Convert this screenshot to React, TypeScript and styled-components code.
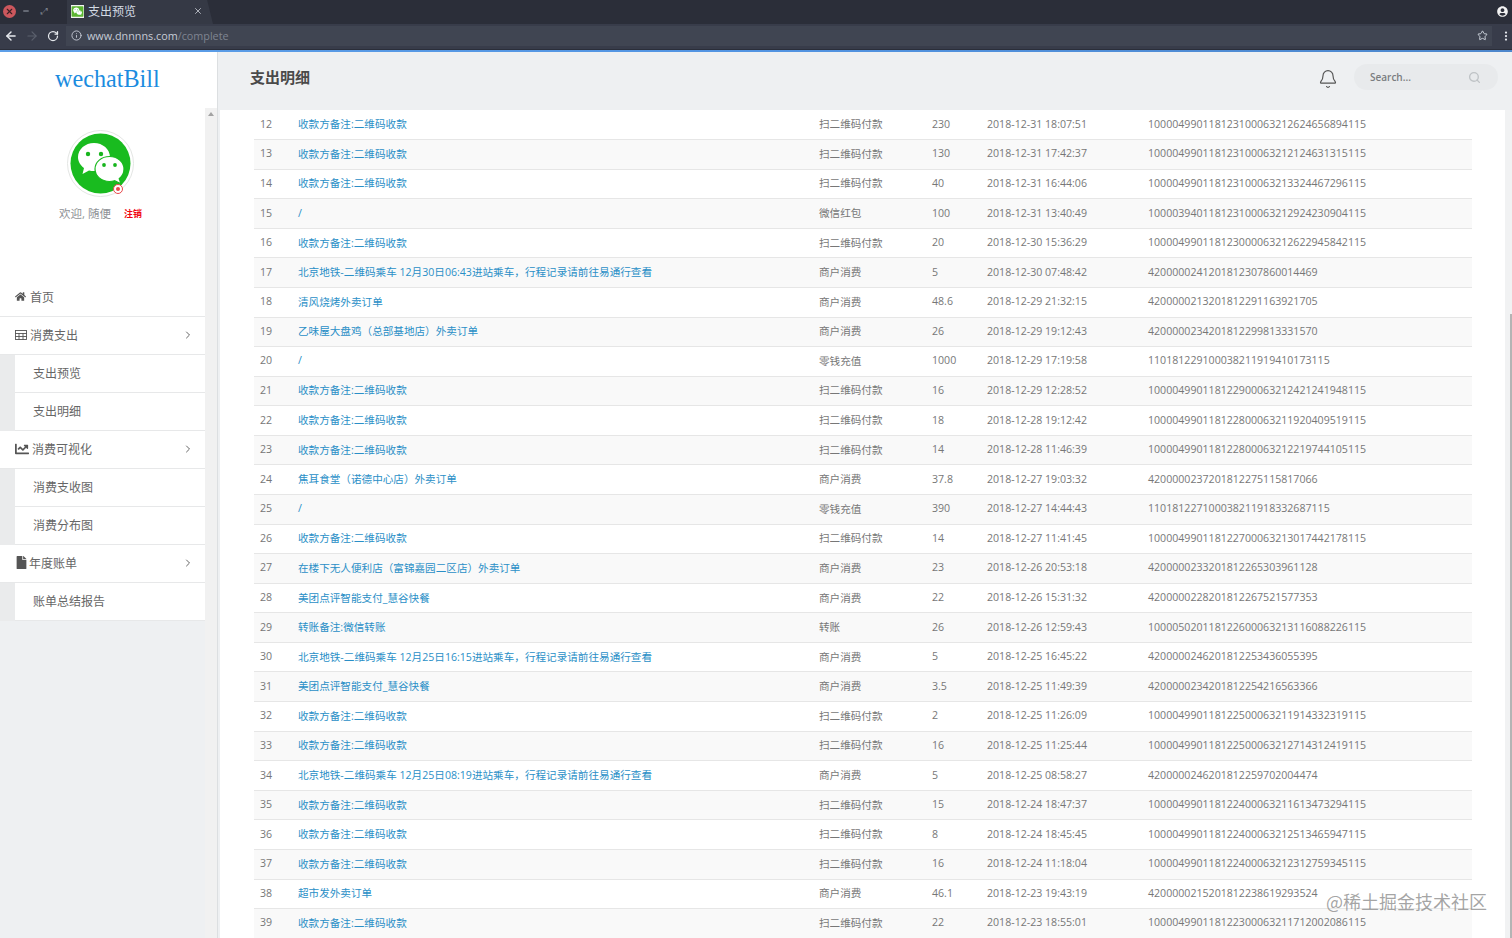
import React from "react";
import styled, { createGlobalStyle } from "styled-components";
import { ArrowLeft, ArrowRight, RotateCw, Info, Star, EllipsisVertical, Bell, Search, X, Minus, ChevronRight } from "lucide-react";
import { FaHome, FaChartLine, FaFile, FaUserCircle } from "react-icons/fa";

const Global = createGlobalStyle`
  html, body { margin: 0; padding: 0; height: 938px; overflow: hidden; background: #eef0f2; }
  * { box-sizing: border-box; }
  body { font-family: "Open Sans", "Noto Sans CJK SC", sans-serif; }
`;

const Page = styled.div`
  width: 1512px;
  height: 938px;
  display: flex;
  flex-direction: column;
  overflow: hidden;
  position: relative;
`;
const TabBar = styled.div`
  height: 24px;
  background: #2b2e39;
  display: flex;
  align-items: center;
  padding: 0 0 2px 3px;
`;
const WinClose = styled.span`
  width: 13px;
  height: 13px;
  border-radius: 50%;
  background: #cc575d;
  color: #3a2025;
  display: flex;
  align-items: center;
  justify-content: center;
`;
const WinBtn = styled.span`
  width: 19px;
  display: flex;
  justify-content: center;
  color: #9ea3af;
`;
const WinExpand = styled.span`
  width: 19px;
  display: flex;
  justify-content: center;
  color: #7d818c;
  font-size: 9px;
  line-height: 10px;
`;
const Tab = styled.div`
  margin: 2px 0 0 13px;
  width: 146px;
  height: 24px;
  background: #353945;
  display: flex;
  align-items: center;
  padding: 0 8px 2px 4px;
  color: #d3dae3;
  font-size: 12px;
  clip-path: polygon(0 0, 96% 0, 100% 100%, 0 100%);
`;
const TabIcon = styled.svg`
  width: 13px;
  height: 13px;
  margin-right: 4px;
  flex: none;
`;
const TabTitle = styled.span`
  flex: 1;
`;
const TabClose = styled.span`
  color: #c6cad2;
  display: flex;
  margin-right: 2px;
`;
const AccountIcon = styled.span`
  margin-left: auto;
  margin-right: 4px;
  color: #f2f2f2;
  display: flex;
  font-size: 11px;
`;
const ToolBar = styled.div`
  height: 26px;
  background: #383c4a;
  display: flex;
  align-items: center;
  padding-bottom: 2px;
  border-bottom: 1px solid #2b2e39;
`;
const NavBtn = styled.span<{ $dim?: boolean; $w: number }>`
  width: ${(p) => p.$w}px;
  display: flex;
  justify-content: center;
  color: ${(p) => (p.$dim ? "#5b606d" : "#e6e9ee")};
`;
const UrlBar = styled.div`
  width: 1426px;
  height: 20px;
  background: #404552;
  margin-left: 2px;
  display: flex;
  align-items: center;
  padding-left: 5px;
  font-size: 10.8px;
  color: #c7ccd6;
`;
const UrlIcon = styled.span`
  display: flex;
  color: #c7ccd6;
  margin-right: 5px;
`;
const UrlHost = styled.span``;
const UrlPath = styled.span`
  color: #7f8491;
`;
const UrlStar = styled.span`
  margin-left: auto;
  margin-right: 4px;
  display: flex;
  color: #d3dae3;
`;
const MenuDots = styled.span`
  margin-left: auto;
  width: 12px;
  display: flex;
  justify-content: center;
  color: #e6e9ee;
`;
const Blue = styled.div`
  height: 2px;
  background: linear-gradient(90deg, #5d9fe8 0, #5294e2 50%, #4d87cc 100%);
`;
const Body = styled.div`
  flex: 1;
  display: flex;
  min-height: 0;
`;
const Side = styled.aside`
  width: 218px;
  flex: none;
  display: flex;
  flex-direction: column;
  border-right: 1px solid #dcdfe1;
  background: #eef0f2;
`;
const Logo = styled.div`
  height: 56px;
  background: #fff;
  font-family: "Liberation Serif", serif;
  font-size: 24.2px;
  color: #1b8ce0;
  display: flex;
  align-items: flex-start;
  padding: 12px 0 0 55px;
  line-height: 30px;
`;
const SideRow = styled.div`
  flex: 1;
  display: flex;
  min-height: 0;
`;
const SideInner = styled.div`
  width: 205px;
  flex: none;
  display: flex;
  flex-direction: column;
`;
const Track = styled.div`
  width: 12px;
  flex: none;
  background: #f1f1f1;
  display: flex;
  justify-content: center;
  padding-top: 4px;
`;
const TrackArrow = styled.span`
  width: 0;
  height: 0;
  border-left: 3px solid transparent;
  border-right: 3px solid transparent;
  border-bottom: 4px solid #a3a3a3;
`;
const Profile = styled.div`
  height: 171px;
  background: #fff;
  display: flex;
  flex-direction: column;
  position: relative;
  padding: 22px 0 0 0;
`;
const AvatarWrap = styled.div`
  width: 67px;
  height: 67px;
  margin-left: 67px;
  position: relative;
`;
const AvatarSvg = styled.svg`
  width: 67px;
  height: 67px;
  display: block;
`;
const StatusDot = styled.span`
  position: absolute;
  left: 46px;
  top: 54px;
  width: 10px;
  height: 10px;
  border-radius: 50%;
  border: 1.5px solid #e8474a;
  background: #fff;
  display: flex;
  align-items: center;
  justify-content: center;
`;
const StatusCore = styled.span`
  width: 4px;
  height: 4px;
  border-radius: 50%;
  background: #e8474a;
`;
const Welcome = styled.div`
  margin: 9px 0 0 59px;
  display: flex;
  align-items: center;
  font-size: 11.5px;
  color: #8f9296;
  line-height: 16px;
`;
const Logout = styled.span`
  margin-left: 13px;
  font-size: 9px;
  font-weight: 700;
  color: #f0050f;
`;
const MenuItem = styled.div`
  height: 38px;
  background: #fff;
  border-bottom: 1px solid #e7e8e9;
  display: flex;
  align-items: center;
  padding: 0 11px 2px 15px;
  font-size: 12px;
  color: #666;
`;
const MenuIcon = styled.span<{ $size: number; $gap: number }>`
  display: flex;
  color: #555;
  margin-right: ${(p) => p.$gap}px;
  font-size: ${(p) => p.$size}px;
`;
const TableGlyph = styled.svg`
  width: 12px;
  height: 10px;
  display: block;
`;
const MenuChevron = styled.span`
  margin-left: auto;
  display: flex;
  color: #666;
  margin-top: 1px;
`;
const SubWrap = styled.div`
  padding-left: 15px;
  background: #eaebec;
`;
const SubItem = styled.div`
  height: 38px;
  background: #fff;
  border-bottom: 1px solid #e7e8e9;
  display: flex;
  align-items: center;
  padding: 0 0 2px 18px;
  font-size: 12px;
  color: #666;
`;
const Main = styled.main`
  flex: 1;
  min-width: 0;
  display: flex;
  flex-direction: column;
`;
const Header = styled.header`
  height: 58px;
  flex: none;
  display: flex;
  align-items: center;
  padding: 0 14px 8px 32px;
`;
const Title = styled.h1`
  margin: 0 0 2px;
  font-size: 15px;
  font-weight: 700;
  color: #4a4a4a;
  font-family: "Noto Sans CJK SC", sans-serif;
`;
const BellWrap = styled.span`
  margin-left: auto;
  margin-right: 16px;
  margin-top: 3px;
  display: flex;
  color: #555;
`;
const SearchBox = styled.div`
  width: 144px;
  height: 26px;
  border-radius: 13px;
  background: #e8eaec;
  display: flex;
  align-items: center;
  padding: 0 17px 0 16px;
  font-size: 10px;
  font-weight: 600;
  color: #7a7d80;
`;
const SearchIcon = styled.span`
  margin-left: auto;
  display: flex;
  color: #bfc3c6;
`;
const ContentRow = styled.div`
  flex: 1;
  min-height: 0;
  display: flex;
  margin-left: 2px;
`;
const Card = styled.section`
  flex: 1;
  background: #fff;
  padding: 0 33px 0 34px;
  overflow: hidden;
`;
const PageBar = styled.div`
  width: 7px;
  flex: none;
  display: flex;
  justify-content: flex-end;
  padding-top: 204px;
  background: #f1f2f3;
`;
const PageThumb = styled.span`
  width: 2px;
  background: #b4b4b4;
`;
const Table = styled.table`
  width: 1218px;
  table-layout: fixed;
  border-collapse: collapse;
  font-size: 10.6px;
  color: #777;
`;
const Row = styled.tr<{ $odd: boolean }>`
  height: 29.58px;
  background: ${(p) => (p.$odd ? "#f9f9f9" : "#fff")};
`;
const Cell = styled.td`
  padding: 0 6px 2px;
  border-bottom: 1px solid #e6e6e6;
  white-space: nowrap;
  overflow: hidden;
`;
const LinkCell = styled(Cell)`
  color: #2a8fc7;
`;
const Mark = styled.div`
  position: absolute;
  left: 1326px;
  top: 889px;
  font-size: 18px;
  line-height: 24px;
  color: rgba(130, 130, 130, 0.72);
  font-family: "Noto Sans CJK SC", sans-serif;
  pointer-events: none;
`;

const QR = "收款方备注:二维码收款";
const SM = "扫二维码付款";
const SH = "商户消费";
const LQ = "零钱充值";
const rows: [number, string, string, string, string, string][] = [
  [12, QR, SM, "230", "2018-12-31 18:07:51", "100004990118123100063212624656894115"],
  [13, QR, SM, "130", "2018-12-31 17:42:37", "100004990118123100063212124631315115"],
  [14, QR, SM, "40", "2018-12-31 16:44:06", "100004990118123100063213324467296115"],
  [15, "/", "微信红包", "100", "2018-12-31 13:40:49", "100003940118123100063212924230904115"],
  [16, QR, SM, "20", "2018-12-30 15:36:29", "100004990118123000063212622945842115"],
  [17, "北京地铁-二维码乘车 12月30日06:43进站乘车，行程记录请前往易通行查看", SH, "5", "2018-12-30 07:48:42", "4200000241201812307860014469"],
  [18, "清风烧烤外卖订单", SH, "48.6", "2018-12-29 21:32:15", "4200000213201812291163921705"],
  [19, "乙味屋大盘鸡（总部基地店）外卖订单", SH, "26", "2018-12-29 19:12:43", "4200000234201812299813331570"],
  [20, "/", LQ, "1000", "2018-12-29 17:19:58", "110181229100038211919410173115"],
  [21, QR, SM, "16", "2018-12-29 12:28:52", "100004990118122900063212421241948115"],
  [22, QR, SM, "18", "2018-12-28 19:12:42", "100004990118122800063211920409519115"],
  [23, QR, SM, "14", "2018-12-28 11:46:39", "100004990118122800063212219744105115"],
  [24, "焦耳食堂（诺德中心店）外卖订单", SH, "37.8", "2018-12-27 19:03:32", "4200000237201812275115817066"],
  [25, "/", LQ, "390", "2018-12-27 14:44:43", "110181227100038211918332687115"],
  [26, QR, SM, "14", "2018-12-27 11:41:45", "100004990118122700063213017442178115"],
  [27, "在楼下无人便利店（富锦嘉园二区店）外卖订单", SH, "23", "2018-12-26 20:53:18", "4200000233201812265303961128"],
  [28, "美团点评智能支付_慧谷快餐", SH, "22", "2018-12-26 15:31:32", "4200000228201812267521577353"],
  [29, "转账备注:微信转账", "转账", "26", "2018-12-26 12:59:43", "100005020118122600063213116088226115"],
  [30, "北京地铁-二维码乘车 12月25日16:15进站乘车，行程记录请前往易通行查看", SH, "5", "2018-12-25 16:45:22", "4200000246201812253436055395"],
  [31, "美团点评智能支付_慧谷快餐", SH, "3.5", "2018-12-25 11:49:39", "4200000234201812254216563366"],
  [32, QR, SM, "2", "2018-12-25 11:26:09", "100004990118122500063211914332319115"],
  [33, QR, SM, "16", "2018-12-25 11:25:44", "100004990118122500063212714312419115"],
  [34, "北京地铁-二维码乘车 12月25日08:19进站乘车，行程记录请前往易通行查看", SH, "5", "2018-12-25 08:58:27", "4200000246201812259702004474"],
  [35, QR, SM, "15", "2018-12-24 18:47:37", "100004990118122400063211613473294115"],
  [36, QR, SM, "8", "2018-12-24 18:45:45", "100004990118122400063212513465947115"],
  [37, QR, SM, "16", "2018-12-24 11:18:04", "100004990118122400063212312759345115"],
  [38, "超市发外卖订单", SH, "46.1", "2018-12-23 19:43:19", "4200000215201812238619293524"],
  [39, QR, SM, "22", "2018-12-23 18:55:01", "100004990118122300063211712002086115"],
];

const WeChatGlyph = () => (
  <>
    <path d="M27 13c-8.800 0-16 6.300-16 14 0 4.500 2.400 8.400 6 11l-1.500 6 6.500-3.500c1.600.4 3.300.5 5 .5 8.800 0 16-6.300 16-14S35.800 13 27 13z" fill="#fff" />
    <path d="M57 39c0-7-6.500-12.500-14.500-12.500S28 32 28 39s6.500 12.500 14.500 12.500c1.800 0 3.500-.3 5-.8l6.500 3-1.800-5C55 46.500 57 43 57 39z" fill="#fff" stroke="#19b91e" strokeWidth="1.200" />
    <circle cx="21" cy="24" r="2.200" fill="#17b51d" />
    <circle cx="34" cy="24" r="2.200" fill="#17b51d" />
    <circle cx="37" cy="35" r="1.900" fill="#17b51d" />
    <circle cx="48" cy="35" r="1.900" fill="#17b51d" />
  </>
);

export default function App() {
  return (
    <Page>
      <Global />
      <TabBar>
        <WinClose><X size={9} strokeWidth={3} /></WinClose>
        <WinBtn><Minus size={8} strokeWidth={3} /></WinBtn>
        <WinExpand>⤢</WinExpand>
        <Tab>
          <TabIcon viewBox="0 0 67 67">
            <rect width="67" height="67" fill="#f4f4f4" />
            <rect x="3" y="6" width="61" height="55" rx="4" fill="#5cb531" />
            <WeChatGlyph />
          </TabIcon>
          <TabTitle>支出预览</TabTitle>
          <TabClose><X size={10} strokeWidth={2} /></TabClose>
        </Tab>
        <AccountIcon><FaUserCircle /></AccountIcon>
      </TabBar>
      <ToolBar>
        <NavBtn $w={22}><ArrowLeft size={14} strokeWidth={2.5} /></NavBtn>
        <NavBtn $w={20} $dim><ArrowRight size={14} strokeWidth={2} /></NavBtn>
        <NavBtn $w={22}><RotateCw size={12} strokeWidth={2.5} /></NavBtn>
        <UrlBar>
          <UrlIcon><Info size={11} /></UrlIcon>
          <UrlHost>www.dnnnns.com</UrlHost>
          <UrlPath>/complete</UrlPath>
          <UrlStar><Star size={11} strokeWidth={2} /></UrlStar>
        </UrlBar>
        <MenuDots><EllipsisVertical size={12} strokeWidth={2.5} /></MenuDots>
      </ToolBar>
      <Blue />
      <Body>
        <Side>
          <Logo>wechatBill</Logo>
          <SideRow>
            <SideInner>
              <Profile>
                <AvatarWrap>
                  <AvatarSvg viewBox="0 0 67 67">
                    <circle cx="33.500" cy="33.500" r="33" fill="#fff" stroke="#e4e6e4" strokeWidth="1" />
                    <circle cx="33.500" cy="33.500" r="30" fill="#19bb1f" />
                    <WeChatGlyph />
                  </AvatarSvg>
                  <StatusDot><StatusCore /></StatusDot>
                </AvatarWrap>
                <Welcome>欢迎, 随便<Logout>注销</Logout></Welcome>
              </Profile>
              <MenuItem><MenuIcon $size={11} $gap={4}><FaHome /></MenuIcon>首页</MenuItem>
              <MenuItem>
                <MenuIcon $size={12} $gap={3}>
                  <TableGlyph viewBox="0 0 12 10" fill="none" stroke="#555" strokeWidth="0.9">
                    <rect x="0.500" y="0.500" width="11" height="9" />
                    <path d="M0 3.500h12M0 6.500h12M4 3v7M8 3v7" />
                  </TableGlyph>
                </MenuIcon>
                消费支出
                <MenuChevron><ChevronRight size={12} /></MenuChevron>
              </MenuItem>
              <SubWrap>
                <SubItem>支出预览</SubItem>
                <SubItem>支出明细</SubItem>
              </SubWrap>
              <MenuItem><MenuIcon $size={14} $gap={3}><FaChartLine /></MenuIcon>消费可视化<MenuChevron><ChevronRight size={12} /></MenuChevron></MenuItem>
              <SubWrap>
                <SubItem>消费支收图</SubItem>
                <SubItem>消费分布图</SubItem>
              </SubWrap>
              <MenuItem><MenuIcon $size={13} $gap={1}><FaFile /></MenuIcon>年度账单<MenuChevron><ChevronRight size={12} /></MenuChevron></MenuItem>
              <SubWrap>
                <SubItem>账单总结报告</SubItem>
              </SubWrap>
            </SideInner>
            <Track><TrackArrow /></Track>
          </SideRow>
        </Side>
        <Main>
          <Header>
            <Title>支出明细</Title>
            <BellWrap><Bell size={20} strokeWidth={1.4} /></BellWrap>
            <SearchBox>
              Search...
              <SearchIcon><Search size={13} strokeWidth={2.5} /></SearchIcon>
            </SearchBox>
          </Header>
          <ContentRow>
            <Card>
              <Table>
                <colgroup>
                  <col width={38} />
                  <col width={521} />
                  <col width={113} />
                  <col width={55} />
                  <col width={161} />
                  <col width={330} />
                </colgroup>
                <tbody>
                  {rows.map((r, i) => (
                    <Row key={r[0]} $odd={i % 2 === 1}>
                      <Cell>{r[0]}</Cell>
                      <LinkCell>{r[1]}</LinkCell>
                      <Cell>{r[2]}</Cell>
                      <Cell>{r[3]}</Cell>
                      <Cell>{r[4]}</Cell>
                      <Cell>{r[5]}</Cell>
                    </Row>
                  ))}
                </tbody>
              </Table>
            </Card>
            <PageBar><PageThumb /></PageBar>
          </ContentRow>
        </Main>
      </Body>
      <Mark>@稀土掘金技术社区</Mark>
    </Page>
  );
}
